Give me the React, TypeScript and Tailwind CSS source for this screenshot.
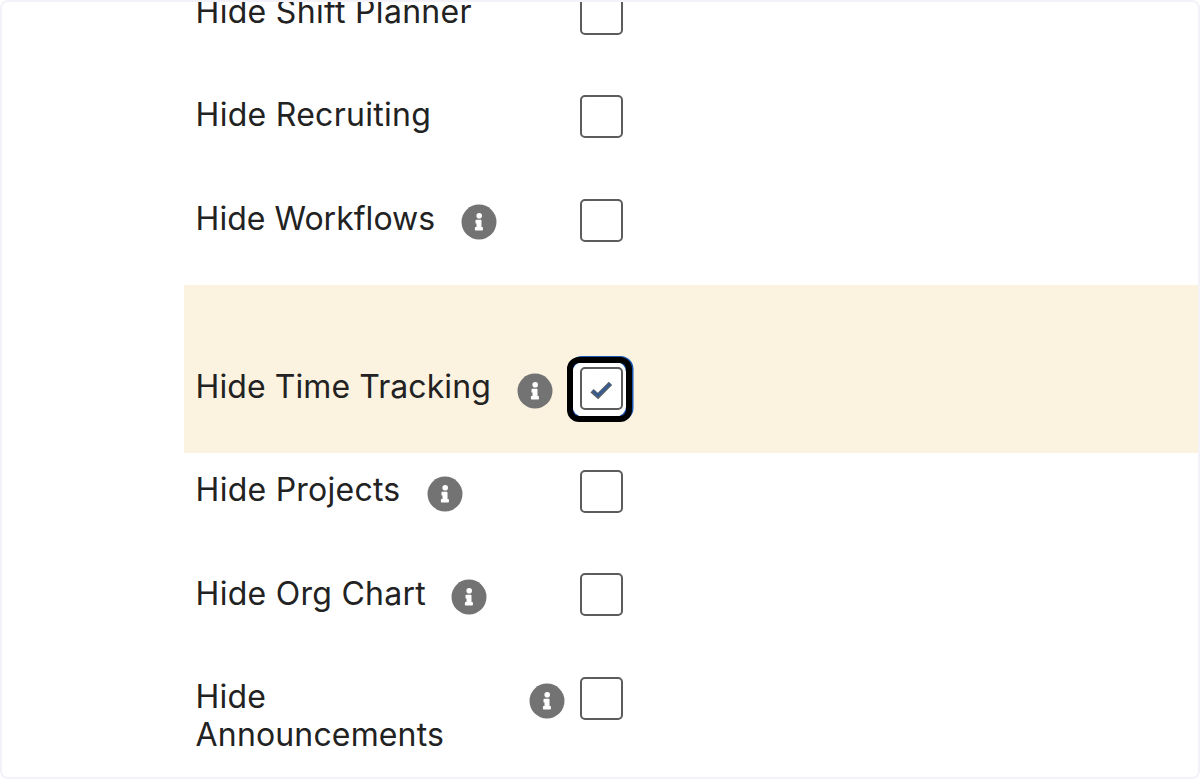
import clsx from 'clsx';

type Setting = {
  label: string;
  // width and letter spacing of the label's text column
  text: string;
  info?: boolean;
  checked?: boolean;
};

const settings: Setting[] = [
  { label: 'Hide Shift Planner', text: 'w-[333px] tracking-[0.3px]' },
  { label: 'Hide Recruiting', text: 'w-[333px] tracking-[0.28px]' },
  { label: 'Hide Workflows', text: 'w-[265px] tracking-[0.02px]', info: true },
  { label: 'Hide Time Tracking', text: 'w-[321px] tracking-[0.08px]', info: true, checked: true },
  { label: 'Hide Projects', text: 'w-[231px] tracking-[0.25px]', info: true },
  { label: 'Hide Org Chart', text: 'w-[255.8px] tracking-[0.27px]', info: true },
  { label: 'Hide Announcements', text: 'w-[333px] pr-10 tracking-[0.15px]', info: true },
];

function InfoIcon() {
  return (
    <svg viewBox="0 0 36 36" className="mt-[22.8px] size-9 shrink-0">
      <circle cx="18" cy="18" r="17.5" fill="#737373" />
      <circle cx="18.2" cy="11.8" r="2.8" fill="#fff" />
      <path
        d="M15.2 16.5h4.6v7.2h1.4v2h-6.6v-2h1.6v-4.8h-1z"
        fill="#fff"
        stroke="#fff"
        strokeWidth="1.4"
        strokeLinejoin="round"
      />
    </svg>
  );
}

function Checkbox({ checked }: { checked?: boolean }) {
  return (
    <div
      role="checkbox"
      aria-checked={!!checked}
      className="relative mt-[17px] size-[43px] shrink-0 rounded-[5px] border-2 border-[#5c5c5c] bg-white"
    >
      {checked && (
        <svg viewBox="0 0 66 66" className="absolute -left-[15px] -top-[13px] size-[66px] overflow-visible">
          <rect x="2" y="0" width="64.5" height="65" rx="13" fill="#1857b6" />
          <rect x="5.5" y="6" width="53.5" height="54.5" rx="10" fill="#fff" />
          <rect x="3" y="4" width="59" height="59" rx="9" fill="none" stroke="#000" strokeWidth="6" />
          <rect x="14" y="12" width="41" height="41" rx="4" fill="#fff" stroke="#5c5c5c" strokeWidth="2" />
          <path d="M25 34.8l6 5.2L43.5 27.4" fill="none" stroke="#56616f" strokeWidth="4.8" />
          <path d="M26 35l5 4.3L43 27.8" fill="none" stroke="#2b5a9c" strokeWidth="1.6" />
        </svg>
      )}
    </div>
  );
}

function SettingRow({ label, text, info, checked }: Setting) {
  return (
    <div className={clsx('pl-[11.6px]', checked && 'bg-[#fbf3e0] pt-[65px]')}>
      <div className="flex h-[103.3px] items-start">
        <div className="flex w-[384px] shrink-0 items-start">
          <span className={clsx('shrink-0 pt-[18.2px]', text)}>{label}</span>
          {info && <InfoIcon />}
        </div>
        <Checkbox checked={checked} />
      </div>
    </div>
  );
}

export default function App() {
  return (
    <main className="h-[779px] w-[1200px] overflow-hidden rounded-lg border-2 border-[#f3f2f8] bg-white font-['Inter',sans-serif] text-[32px] leading-[38px] text-[#222]">
      <div className="-mt-[27px] ml-[182px]">
        {settings.map((setting) => (
          <SettingRow key={setting.label} {...setting} />
        ))}
      </div>
    </main>
  );
}
